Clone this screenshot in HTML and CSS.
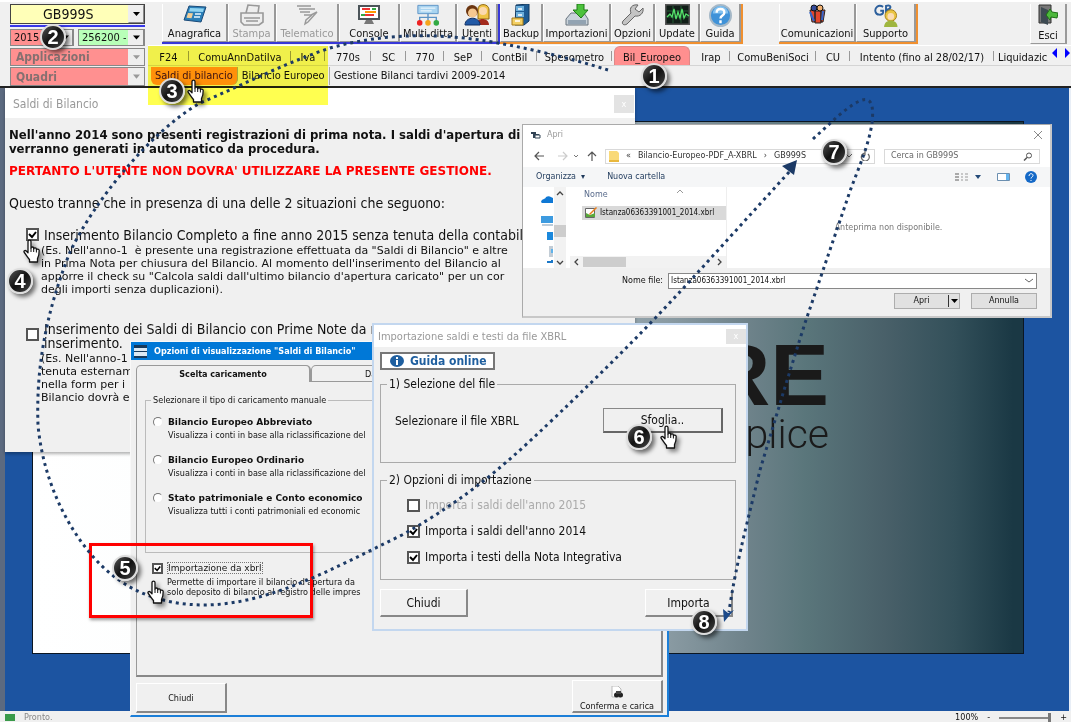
FILE: index.html
```html
<!DOCTYPE html>
<html lang="it">
<head>
    <meta charset="UTF-8">
    <meta name="viewport" content="width=device-width, initial-scale=1.0">
    <title>Saldi di Bilancio</title>
    <link rel="stylesheet" href="styles.css">
</head>
<body>
    <!-- shared shapes -->
    <svg class="defs" aria-hidden="true">
        <symbol id="hand" viewBox="0 0 18 24">
            <path d="M5 2.5C5 .6 8 .6 8 2.5V9c0-1.500 2.700-1.300 2.700.3v.5c.2-1.300 2.700-1.200 2.700.4v.6c.4-1.100 2.800-.9 2.800.8 0 4-.2 5.500-1.700 8V23H6.500v-2.500C4.800 18.500 3.300 16 1.300 13.500.3 12 2 10.800 3.300 12L5 13.800z" fill="#fff" stroke="#111" stroke-width="1.300" stroke-linejoin="round"/>
            <path d="M8 9v4M10.700 10v3M13.400 11v2.500" stroke="#111" stroke-width="1"/>
        </symbol>
    </svg>

    <header class="ribbon">
        <div class="selectors">
            <select class="combo company" aria-label="Ditta"><option>GB999S</option></select>
            <div class="selector-row">
                <select class="combo year" aria-label="Anno"><option>2015</option></select>
                <select class="combo code" aria-label="Codice"><option>256200 -</option></select>
            </div>
            <select class="combo section" aria-label="Applicazioni" disabled><option>Applicazioni</option></select>
            <select class="combo section" aria-label="Quadri" disabled><option>Quadri</option></select>
        </div>

        <div class="ribbon-main">
            <div class="toolbar">
                <div class="tool-group group-blue">
                    <button class="tool">
                        <svg width="24" height="20" viewBox="0 0 24 20"><path d="M6 2l17 1-5 15-17-2z" fill="#2a7fb8" stroke="#1b4a78"/><path d="M7 4l14 .6-1 3.400-14-.6z" fill="#8fd4f2"/><path d="M5 9l5 .2-1.500 5-5-.4z" fill="#f1cf9a"/><path d="M12 10h6M11 13h6" stroke="#e6f6ff" stroke-width="1.500"/></svg>
                        Anagrafica
                    </button>
                    <button class="tool" disabled>
                        <svg width="26" height="22" viewBox="0 0 26 22"><path d="M7 9L9 1l11 1-1 7M2 9h22v9l-4 3H5l-3-3zM5 14h16M7 17h12" fill="#eee" stroke="#999" stroke-width="1.600"/></svg>
                        Stampa
                    </button>
                    <button class="tool" disabled>
                        <svg width="24" height="22" viewBox="0 0 24 22"><path d="M2 2h14M4 5h16M5 8h10M9 11h7l6-3-9 10-3 2 1-4 6-5" fill="none" stroke="#999" stroke-width="1.400"/></svg>
                        Telematico
                    </button>
                    <button class="tool">
                        <svg width="24" height="22" viewBox="0 0 24 22"><path d="M1 1h22v15H1z" fill="#4c5459"/><path d="M3 3h18v11H3z" fill="#fff"/><path d="M5 5h8M8 11h9" stroke="#e33" stroke-width="2"/><path d="M8 8h11" stroke="#f90" stroke-width="2"/><path d="M15 5h4M4 11h4" stroke="#3a4" stroke-width="2"/><path d="M9 16h6l2 4H7z" fill="#777"/></svg>
                        Console
                    </button>
                    <button class="tool">
                        <svg width="24" height="23" viewBox="0 0 26 24"><path d="M2 1h22v9H2z" fill="#a9d4f0" stroke="#5b93c5"/><path d="M5 4h16M5 7h12" stroke="#fff"/><path d="M13 10v8M4 19v-5h18v5" fill="none" stroke="#5b93c5" stroke-width="1.500"/><circle cx="4" cy="20" r="3" fill="#e22"/><circle cx="13" cy="20" r="3" fill="#f5a51c"/><circle cx="22" cy="20" r="3" fill="#3a4"/></svg>
                        Multi ditta
                    </button>
                    <button class="tool">
                        <svg width="26" height="22" viewBox="0 0 26 22"><path d="M14 5c0-6 11-6 11 1v9H14z" fill="#f0c445" stroke="#8d6510"/><circle cx="19" cy="7" r="4" fill="#fbd9ae"/><path d="M12 21c0-8 13-8 13 0z" fill="#a32a1c"/><circle cx="8" cy="7" r="6" fill="#6b3510"/><circle cx="8.500" cy="9" r="4.500" fill="#f6c890"/><path d="M1 21c0-9 15-9 15 0z" fill="#2159a6" stroke="#103166"/></svg>
                        Utenti
                    </button>
                </div>
                <div class="tool-group group-orange">
                    <button class="tool">
                        <svg width="20" height="22" viewBox="0 0 20 22"><path d="M5 1l13-1v17l-5 4H4z" fill="#1e5c94" stroke="#123a60"/><path d="M5 2h8v5H5zM5 8h8v5H5z" fill="#6aaedb"/><path d="M1 14h11v7H1z" fill="#f3cf62" stroke="#a67a17"/><path d="M7 5h4M7 11h4M4 17h5" stroke="#fff" stroke-width="1.500"/></svg>
                        Backup
                    </button>
                    <button class="tool">
                        <svg width="24" height="22" viewBox="0 0 24 22"><path d="M1 15l5-6h13l4 6v6H1z" fill="#c9d2da" stroke="#68747e"/><path d="M3 16h18v4H3z" fill="#92a3b2"/><path d="M12 0h7v6h4l-7 8-8-8h4z" fill="#4cc23c" stroke="#1d7a16"/></svg>
                        Importazioni
                    </button>
                    <button class="tool">
                        <svg width="24" height="22" viewBox="0 0 24 22"><path d="M22 4l-4 4-4-3 3-4c-6-1-9 3-7 8L2 17c-2 3 1 5 4 3l8-8c5 1 9-3 8-8z" fill="#c4c4c4" stroke="#666"/></svg>
                        Opzioni
                    </button>
                    <button class="tool">
                        <svg width="25" height="21" viewBox="0 0 25 21"><path d="M.5.5h24v20H.5z" fill="#111e18" stroke="#555" stroke-width="2"/><path d="M2 7h21M2 13h21M8 2v17M16 2v17" stroke="#255c35"/><path d="M2 13l3-3 2 3 2-8 2 10 2-7 2 6 2-9 2 9 2-4 3 2" fill="none" stroke="#54e06a" stroke-width="1.300"/></svg>
                        Update
                    </button>
                    <button class="tool">
                        <svg width="23" height="23" viewBox="0 0 24 24"><circle cx="12" cy="12" r="11" fill="#3f92d8" stroke="#a5b8c7" stroke-width="2"/><path d="M4 10a8 8 0 0 1 16 0z" fill="#83c1ef"/><path d="M8 9c0-5 8-5 8 0 0 3-4 3-4 6M12 17v3" fill="none" stroke="#fff" stroke-width="2.500"/></svg>
                        Guida
                    </button>
                </div>
                <div class="tool-group group-support">
                    <button class="tool">
                        <svg width="18" height="20" viewBox="0 0 18 20"><path d="M2 6h5v12H4zM7 7h6v12H7zM13 6h4l-2 12h-2z" fill="#e2462b" stroke="#222"/><path d="M2 8l4 9M15 7l-1 9" stroke="#36c" stroke-width="2"/><circle cx="6" cy="4" r="3" fill="#334a9a" stroke="#111"/><circle cx="12" cy="4" r="3" fill="#f0b070" stroke="#111"/></svg>
                        Comunicazioni
                    </button>
                    <button class="tool">
                        <svg width="26" height="23" viewBox="0 0 26 24"><path d="M10 3c-5-3-9 1-8 5 1 4 7 4 8 1V7H7M13 10V2c6-2 6 3 1 4 6 0 5 5-1 4" fill="none" stroke="#2c5f9c" stroke-width="2"/><circle cx="18" cy="12" r="6" fill="#eac544" stroke="#a77e17"/><circle cx="18" cy="13" r="3.500" fill="#fbdcb4"/><path d="M11 24c0-9 14-9 14 0z" fill="#9fb63f"/></svg>
                        Supporto
                    </button>
                </div>
                <div class="tool-group group-exit">
                    <button class="tool">
                        <svg width="20" height="22" viewBox="0 0 20 22"><path d="M1 1h12v18H1z" fill="#777" stroke="#333"/><path d="M3 3l7 3v15l-7-3z" fill="#3d4a52"/><path d="M20 9l-6-1-2-3-4 6 4 5 1-3 6 1z" fill="#4db83c" stroke="#1d6e15"/></svg>
                        Esci
                    </button>
                </div>
            </div>

            <nav class="tabs">
                <a href="#" class="tab">F24</a>
                <a href="#" class="tab">ComuAnnDatiIva</a>
                <a href="#" class="tab">Iva</a>
                <a href="#" class="tab">770s</a>
                <a href="#" class="tab">SC</a>
                <a href="#" class="tab">770</a>
                <a href="#" class="tab">SeP</a>
                <a href="#" class="tab">ContBil</a>
                <a href="#" class="tab">Spesometro</a>
                <a href="#" class="tab tab-current">Bil_Europeo</a>
                <a href="#" class="tab">Irap</a>
                <a href="#" class="tab">ComuBeniSoci</a>
                <a href="#" class="tab">CU</a>
                <a href="#" class="tab">Intento (fino al 28/02/17)</a>
                <a href="#" class="tab tab-last">Liquidazic</a>
                <span class="tab-arrows">
                    <svg width="18" height="10" viewBox="0 0 18 10"><path d="M5 0v10L0 5zM13 0v10l5-5z" fill="#00f"/></svg>
                </span>
            </nav>
            <nav class="subtabs">
                <a href="#" class="subtab subtab-current">Saldi di bilancio</a>
                <a href="#" class="subtab">Bilancio Europeo</a>
                <a href="#" class="subtab">Gestione Bilanci tardivi 2009-2014</a>
            </nav>
        </div>
    </header>

    <main class="desktop">
        <div class="wallpaper">
            <div class="brand">RE</div>
            <div class="slogan">plice</div>
        </div>

        <section class="window win-saldi">
            <div class="win-title">
                <span>Saldi di Bilancio</span>
                <button class="win-close">x</button>
            </div>
            <div class="saldi-body">
                <p class="strong">Nell'anno 2014 sono presenti registrazioni di prima nota. I saldi d'apertura di<br>verranno generati in automatico da procedura.</p>
                <p class="strong warning">PERTANTO L'UTENTE NON DOVRA' UTILIZZARE LA PRESENTE GESTIONE.</p>
                <p class="intro">Questo tranne che in presenza di una delle 2 situazioni che seguono:</p>
                <div class="choice">
                    <input type="checkbox" class="check" id="completo" checked>
                    <div>
                        <label for="completo">Inserimento Bilancio Completo a fine anno 2015 senza tenuta della contabil</label>
                        <p class="note">(Es. Nell'anno-1&nbsp; è presente una registrazione effettuata da "Saldi di Bilancio" e altre<br>in Prima Nota per chiusura del Bilancio. Al momento dell'inserimento del Bilancio al<br>apporre il check su "Calcola saldi dall'ultimo bilancio d'apertura caricato" per un cor<br>degli importi senza duplicazioni).</p>
                    </div>
                </div>
                <div class="choice">
                    <input type="checkbox" class="check" id="saldi">
                    <div>
                        <label for="saldi">Inserimento dei Saldi di Bilancio con Prime Note da r<br>inserimento.</label>
                        <p class="note">(Es. Nell'anno-1<br>tenuta esternam<br>nella form per i<br>Bilancio dovrà e</p>
                    </div>
                </div>
            </div>
        </section>

        <section class="window win-file">
            <div class="file-title">
                <svg width="10" height="8" viewBox="0 0 10 8"><path d="M0 1h5v2H0zM2 3h6v4H2z" fill="#345" /><path d="M4 4h5v3H4z" fill="#fff" stroke="#345"/></svg>
                <span>Apri</span>
                <button class="file-close" aria-label="Chiudi">
                    <svg width="8" height="8" viewBox="0 0 8 8"><path d="M0 0l8 8M8 0L0 8" stroke="#888"/></svg>
                </button>
            </div>
            <div class="file-nav">
                <svg width="66" height="10" viewBox="0 0 66 10" fill="none"><path d="M5 1L1 5l4 4M1 5h9" stroke="#555" stroke-width="1.200"/><path d="M29 1l4 4-4 4M33 5h-9" stroke="#ccc" stroke-width="1.200"/><path d="M40 4l2 2 2-2" stroke="#777"/><path d="M54 5l4-4 4 4M58 1v9" stroke="#555" stroke-width="1.200"/></svg>
                <div class="address">
                    <svg width="10" height="11" viewBox="0 0 10 11"><path d="M0 0h8l2 2v9H0z" fill="#f9d978"/><path d="M0 9h10v2H0z" fill="#e9b83d"/></svg>
                    <span>«</span><span>Bilancio-Europeo-PDF_A-XBRL</span><span>›</span><span>GB999S</span>
                    <svg class="address-end" width="26" height="10" viewBox="0 0 26 10" fill="none"><path d="M1 3l3 3 3-3" stroke="#666"/><path d="M20 2a4 4 0 1 0 3 1M20 0v4h-4" stroke="#666" stroke-width="1.200"/></svg>
                </div>
                <label class="file-search">
                    <input type="text" placeholder="Cerca in GB999S" aria-label="Cerca in GB999S">
                    <svg width="10" height="9" viewBox="0 0 10 9" fill="none"><circle cx="6" cy="3.500" r="2.500" stroke="#555"/><path d="M4 5.500L1 8.500" stroke="#555" stroke-width="1.500"/></svg>
                </label>
            </div>
            <div class="file-tools">
                <button>Organizza&nbsp; ▾</button>
                <button>Nuova cartella</button>
                <svg width="82" height="12" viewBox="0 0 82 12"><path d="M0 2h4v2H0zM0 5h4v2H0zM0 8h4v2H0z" fill="#aaa"/><path d="M6 3h2M10 3h3M6 6h2M10 6h3M6 9h2M10 9h3" stroke="#999"/><path d="M20 4h6l-3 4z" fill="#234a78"/><path d="M42.500 2.500h12v7h-12z" fill="#fff" stroke="#6b8fb0"/><path d="M51 3h3v6h-3z" fill="#64b5f0"/><circle cx="76" cy="6" r="6" fill="#1569c7"/><path d="M74 5c0-3 4-3 4-.5 0 1.500-2 1.500-2 3M76 9v1" fill="none" stroke="#fff"/></svg>
            </div>
            <div class="file-content">
                <div class="file-tree">
                    <svg width="12" height="76" viewBox="0 0 12 76"><path d="M0 15c1-4 4-2 5-5 3-2 5 0 7 1v5H1z" fill="#0f78d4"/><path d="M0 29h12v7H0z" fill="#3d9be0"/><path d="M1 38h11" stroke="#7a9ab5"/><path d="M6 45h6v8H6z" fill="#1b88dc"/><path d="M8 59h4v11H8z" fill="#c3cdd6"/><path d="M10 62h2v4h-2z" fill="#5fb2ea"/><path d="M7 76v-1h4v-2" stroke="#1b78c8" stroke-width="2" fill="none"/></svg>
                </div>
                <div class="vscroll">
                    <svg width="8" height="5" viewBox="0 0 8 5"><path d="M1 4l3-3 3 3" fill="none" stroke="#444" stroke-width="1.300"/></svg>
                    <span></span>
                    <svg width="8" height="5" viewBox="0 0 8 5"><path d="M1 1l3 3 3-3" fill="none" stroke="#444" stroke-width="1.300"/></svg>
                </div>
                <div class="file-list">
                    <div class="file-head">Nome
                        <svg width="8" height="4" viewBox="0 0 8 4"><path d="M1 4l3-3 3 3" fill="none" stroke="#999"/></svg>
                    </div>
                    <div class="file-row">
                        <svg width="14" height="12" viewBox="0 0 14 12"><path d="M1.500 1.500h9v9h-9z" fill="#fff" stroke="#666"/><path d="M2 6l4 2 5-2v4H2z" fill="#59a83a"/><path d="M5 7l7-7 1 1-7 7z" fill="#e97b17"/></svg>
                        Istanza06363391001_2014.xbrl
                    </div>
                    <div class="hscroll">
                        <svg width="5" height="8" viewBox="0 0 5 8"><path d="M4 1L1 4l3 3" fill="none" stroke="#444" stroke-width="1.300"/></svg>
                        <span></span>
                        <svg width="5" height="8" viewBox="0 0 5 8"><path d="M1 1l3 3-3 3" fill="none" stroke="#444" stroke-width="1.300"/></svg>
                    </div>
                </div>
                <div class="file-preview">Anteprima non disponibile.</div>
            </div>
            <div class="file-footer">
                <div class="file-name">
                    <label for="nomefile">Nome file:</label>
                    <select id="nomefile"><option>Istanza06363391001_2014.xbrl</option></select>
                </div>
                <div class="file-buttons">
                    <button class="open">
                        <span>Apri</span>
                        <svg width="11" height="12" viewBox="0 0 11 12"><path d="M.5 0v12" stroke="#333"/><path d="M3 4h7L6.500 8z"/></svg>
                    </button>
                    <button>Annulla</button>
                </div>
            </div>
        </section>

        <section class="window win-options">
            <div class="options-title">
                <svg width="13" height="13" viewBox="0 0 13 13"><path d="M0 0h13v13H0z" fill="#173a5c"/><path d="M0 3h13v3H0zM0 7h13v4H0z" fill="#dbe9f4"/></svg>
                <span>Opzioni di visualizzazione "Saldi di Bilancio"</span>
            </div>
            <div class="options-tabs">
                <button class="options-tab active">Scelta caricamento</button>
                <button class="options-tab">Da</button>
            </div>
            <div class="options-panel">
                <fieldset>
                    <legend>Selezionare il tipo di caricamento manuale</legend>
                    <div class="radio-item">
                        <input type="radio" name="tipo" id="abbreviato">
                        <label for="abbreviato">Bilancio Europeo Abbreviato</label>
                        <p>Visualizza i conti in base alla riclassificazione del</p>
                    </div>
                    <div class="radio-item">
                        <input type="radio" name="tipo" id="ordinario">
                        <label for="ordinario">Bilancio Europeo Ordinario</label>
                        <p>Visualizza i conti in base alla riclassificazione del</p>
                    </div>
                    <div class="radio-item">
                        <input type="radio" name="tipo" id="stato">
                        <label for="stato">Stato patrimoniale e Conto economico</label>
                        <p>Visualizza tutti i conti patrimoniali ed economic</p>
                    </div>
                </fieldset>
                <div class="xbrl-option">
                    <input type="checkbox" class="check small" id="xbrl" checked>
                    <label for="xbrl">Importazione da xbrl</label>
                    <p>Permette di importare il bilancio d'apertura da<br>solo deposito di bilancio al registro delle impres</p>
                </div>
            </div>
            <div class="options-footer">
                <button class="raised">Chiudi</button>
                <button class="raised confirm">
                    <svg width="12" height="12" viewBox="0 0 12 12"><path d="M1 0h6l3 3v8H1z" fill="#fff" stroke="#bbb"/><circle cx="5.500" cy="9" r="2.500" fill="#222"/><circle cx="9.500" cy="9" r="2.500" fill="#222"/><path d="M5 5h5v3H5z" fill="#444"/></svg>
                    Conferma e carica
                </button>
            </div>
        </section>

        <section class="window win-import">
            <div class="import-title">
                <span>Importazione saldi e testi da file XBRL</span>
                <button class="win-close">x</button>
            </div>
            <div class="import-body">
                <button class="guide">
                    <svg width="14" height="12" viewBox="0 0 14 12"><ellipse cx="7" cy="6" rx="7" ry="6" fill="#1f5f9f"/><path d="M7 2v2M7 5v5" stroke="#fff" stroke-width="2"/></svg>
                    Guida online
                </button>
                <fieldset class="pick">
                    <legend>1) Selezione del file</legend>
                    <span>Selezionare il file XBRL</span>
                    <button class="browse">Sfoglia..</button>
                </fieldset>
                <fieldset class="import-options">
                    <legend>2) Opzioni di importazione</legend>
                    <div class="import-check off">
                        <input type="checkbox" class="check" id="s2015" disabled>
                        <label for="s2015">Importa i saldi dell'anno 2015</label>
                    </div>
                    <div class="import-check">
                        <input type="checkbox" class="check" id="s2014" checked>
                        <label for="s2014">Importa i saldi dell'anno 2014</label>
                    </div>
                    <div class="import-check">
                        <input type="checkbox" class="check" id="nota" checked>
                        <label for="nota">Importa i testi della Nota Integrativa</label>
                    </div>
                </fieldset>
                <div class="import-footer">
                    <button class="raised">Chiudi</button>
                    <button class="raised">Importa</button>
                </div>
            </div>
        </section>
    </main>

    <footer class="status">
        <i class="status-icon"></i>
        <span class="status-text">Pronto.</span>
        <span>100%</span>
        <button>-</button>
        <input type="range" value="100" aria-label="Zoom">
        <button>+</button>
    </footer>

    <!-- walkthrough marks -->
    <div class="highlight"></div>
    <div class="redbox"></div>
    <svg class="route" width="1071" height="722" viewBox="0 0 1071 722" aria-hidden="true">
        <path class="dots" d="M608 70C570 58 520 46 480 40C430 33 380 34 330 48C285 63 245 84 200 103C150 132 95 200 70 252C45 315 36 370 38 425C42 470 60 517 90 553C120 590 160 605 205 605C270 604 330 570 402 535C470 497 510 460 547 425C610 365 640 335 690 281L790 171"/>
        <path d="M797 160l-3 15-12-9z" fill="#1c3a66"/>
        <path class="dots" d="M813 139L838 116C860 98 876 88 872 123C868 150 855 175 847 200L805 323L785 387L760 470L747 523C738 560 732 590 729 612"/>
        <path d="M724 622l-1-13 5 4 6-3z" fill="#1c4a8a"/>
    </svg>
    <span class="badge b1">1</span>
    <span class="badge b2">2</span>
    <span class="badge b3">3</span>
    <span class="badge b4">4</span>
    <span class="badge b5">5</span>
    <span class="badge b6">6</span>
    <span class="badge b7">7</span>
    <span class="badge b8">8</span>
    <svg class="hand h1"><use href="#hand"/></svg>
    <svg class="hand h2"><use href="#hand"/></svg>
    <svg class="hand h3"><use href="#hand"/></svg>
    <svg class="hand h4"><use href="#hand"/></svg>
</body>
</html>
```
FILE: styles.css
```css
* {
    box-sizing: border-box;
}
body {
    margin: 0;
    height: 100vh;
    display: flex;
    flex-direction: column;
    overflow: hidden;
    position: relative;
    background-color: #f0f0f0;
    font-family: "DejaVu Sans Condensed", "DejaVu Sans", sans-serif;
    font-size: 11px;
    color: #111;
}
p {
    margin: 0;
}
button, input, select {
    font: inherit;
    color: inherit;
    margin: 0;
}
button {
    padding: 0;
    border: none;
    background: none;
    white-space: nowrap;
}
a {
    color: inherit;
    text-decoration: none;
}
svg {
    display: block;
    flex: none;
}
.defs {
    position: absolute;
    width: 0;
    height: 0;
}

/* ribbon */
.ribbon {
    display: flex;
    flex: none;
    height: 88px;
    border-top: 2px solid #fff;
    border-bottom: 2px solid #222;
}
.selectors {
    width: 148px;
    padding: 2px 3px 0 10px;
    display: flex;
    flex-direction: column;
}
.combo {
    appearance: none;
    height: 20px;
    padding: 0 18px 0 3px;
    border: 1px solid #888;
    border-radius: 0;
    background: #fff url("data:image/svg+xml,%3Csvg xmlns='http://www.w3.org/2000/svg' width='16' height='18'%3E%3Cpath d='M0 0h16v18H0z' fill='%23eee'/%3E%3Cpath d='M.5 17.500h15V.5' fill='none' stroke='%23888'/%3E%3Cpath d='M5 7h7l-3.500 4z'/%3E%3C/svg%3E") no-repeat right center;
}
.company {
    width: 100%;
    padding-left: 32px;
    border-color: #444;
    background-color: #ffffb8;
    font-size: 14px;
}
.selector-row {
    display: flex;
    gap: 4px;
    margin-top: 1px;
    padding-top: 2px;
    border-top: 2px solid #3838e8;
}
.selector-row .combo {
    height: 17px;
}
.year {
    width: 64px;
    background-color: #ff9090;
}
.code {
    flex: 1;
    min-width: 0;
    background-color: #b8ffb8;
}
.section {
    width: 100%;
    margin-top: 2px;
    height: 19px;
    padding-left: 5px;
    background-color: #ff9090;
    background-image: url("data:image/svg+xml,%3Csvg xmlns='http://www.w3.org/2000/svg' width='16' height='18'%3E%3Cpath d='M0 0h16v18H0z' fill='%23eee'/%3E%3Cpath d='M5 7h7l-3.500 4z' fill='%23999'/%3E%3C/svg%3E");
    color: #857070;
    font-size: 12px;
    font-weight: bold;
    opacity: 1;
}
.section + .section {
    margin-top: 1px;
}
.ribbon-main {
    flex: 1;
    min-width: 0;
    display: flex;
    flex-direction: column;
}
.toolbar {
    display: flex;
    height: 43px;
    padding: 2px 4px 0 14px;
}
.tool-group {
    display: grid;
    height: 40px;
}
.group-blue {
    grid-template-columns: 66px 48px 63px 61px 57px 41px;
    border-right: 2px solid #3838d8;
    border-bottom: 2px solid #3838d8;
}
.group-orange {
    grid-template-columns: 43px 68px 44px 45px 41px;
    border-right: 2px solid #f09030;
    border-bottom: 2px solid #f09030;
}
.group-support {
    grid-template-columns: 77px 60px;
    margin-left: 36px;
    border-right: 2px solid #f09030;
    border-bottom: 2px solid #f09030;
}
.group-exit {
    grid-template-columns: 37px;
    margin-left: auto;
}
.tool {
    display: flex;
    flex-direction: column;
    align-items: center;
    justify-content: space-between;
    min-width: 0;
    border-right: 2px solid #999;
    border-bottom: 1px solid #999;
    border-left: 1px solid #fff;
    line-height: 14px;
    background-color: #efefef;
    overflow: hidden;
}
.tool:disabled {
    color: #999;
}
.tabs {
    display: grid;
    grid-template-columns: 41px 102px 34px 46px 35px 38px 38px 55px 75px 80px 38px 86px 34px 144px 1fr 19px;
    height: 20px;
    border-top: 1px solid #fff;
}
.tab {
    display: flex;
    align-items: center;
    justify-content: center;
    min-width: 0;
    padding-top: 3px;
    white-space: nowrap;
    background: linear-gradient(#999, #999) no-repeat right center / 1px 10px;
}
.tab-current {
    margin: 0 2px;
    border: 1px solid #d88;
    border-bottom: none;
    border-radius: 6px 6px 0 0;
    background: #ff8f8f;
}
.tab-last {
    justify-content: flex-start;
    padding-left: 4px;
    background: none;
}
.tab-arrows {
    align-self: start;
    padding-top: 2px;
}
.subtabs {
    display: flex;
    align-items: center;
    height: 20px;
    border-top: 1px solid #d4d4d4;
}
.subtab {
    padding: 0 4px;
    line-height: 18px;
    white-space: nowrap;
    border-right: 1px solid #aaa;
}
.subtab:last-child {
    border-right: none;
}
.subtab-current {
    margin-left: 3px;
    border-radius: 0 0 6px 6px;
    background-color: #ff9020;
    color: #3a1038;
}

/* desktop */
.desktop {
    position: relative;
    flex: 1;
    min-height: 0;
    border-left: 5px solid #5c6a80;
    border-right: 2px solid #e8eef6;
    background-color: #1c54a1;
}
.wallpaper {
    position: absolute;
    left: 27px;
    top: 33px;
    right: 45px;
    bottom: 57px;
    padding: 208px 194px 0 0;
    border: 1px solid #0b1622;
    background: linear-gradient(90deg, #fff 0%, #fdfefe 12%, #8a9ba3 64%, #6f838b 72%, #5a767b 78%, #496069 86%, #33505a 93%, #1a3844 99%);
    text-align: right;
    color: #1a1a1a;
    font-family: Roboto, sans-serif;
}
.brand {
    font-family: "Liberation Sans", sans-serif;
    font-size: 88px;
    line-height: 89px;
    font-weight: bold;
}
.slogan {
    font-size: 41px;
    line-height: 30px;
    font-weight: 300;
}
.window {
    position: absolute;
    overflow: hidden;
    background-color: #f0f0f0;
    white-space: nowrap;
}
.win-close {
    width: 20px;
    height: 18px;
    background-color: #e3e3e3;
    color: #fff;
    font-size: 9px;
}

/* Saldi di Bilancio */
.win-saldi {
    left: 0;
    top: 0;
    width: 630px;
    height: 364px;
    box-shadow: 0 2px 3px rgba(0, 0, 0, 0.3);
}
.win-title {
    display: flex;
    align-items: center;
    justify-content: space-between;
    height: 30px;
    padding: 2px 1px 0 8px;
    background-color: #fff;
    color: #999;
    font-size: 12px;
}
.saldi-body {
    padding: 10px 4px;
    font-size: 14px;
    line-height: 14px;
}
.strong {
    font-weight: bold;
    font-size: 13px;
}
.warning {
    margin-top: 8px;
    color: #f00;
    font-family: "DejaVu Sans", sans-serif;
    font-size: 12px;
}
.intro {
    margin-top: 18px;
}
.choice {
    display: flex;
    gap: 2px;
    padding-left: 17px;
    margin-top: 18px;
}
.choice + .choice {
    margin-top: 26px;
}
.choice + .choice .check {
    margin-top: 6px;
}
.choice label {
    display: block;
    padding-left: 3px;
}
.note {
    font-family: "DejaVu Sans", sans-serif;
    font-size: 11px;
    line-height: 13px;
    margin-top: 2px;
}
.check {
    appearance: none;
    flex: none;
    width: 13px;
    height: 13px;
    border: 2px solid #555;
    background: #fff;
}
.check:checked {
    background: #fff url("data:image/svg+xml,%3Csvg xmlns='http://www.w3.org/2000/svg' viewBox='0 0 9 9'%3E%3Cpath d='M1 4l3 3 4-5' fill='none' stroke='%23000' stroke-width='2'/%3E%3C/svg%3E") no-repeat center;
}
.check.small {
    width: 11px;
    height: 11px;
}

/* open file dialog */
.win-file {
    left: 517px;
    top: 36px;
    width: 530px;
    height: 194px;
    border: 1px solid #aaa;
    border-right: 2px solid #c8c8c8;
    border-bottom: 2px solid #c8c8c8;
    background-color: #fff;
    font-family: "DejaVu Sans", sans-serif;
    font-size: 8px;
    line-height: 12px;
}
.file-title {
    display: flex;
    align-items: center;
    gap: 6px;
    height: 20px;
    padding: 0 8px;
    color: #999;
}
.file-close {
    margin-left: auto;
}
.file-nav {
    display: flex;
    align-items: center;
    height: 22px;
    padding: 0 10px 0 11px;
    gap: 5px;
}
.address {
    display: flex;
    align-items: center;
    gap: 7px;
    flex: 1;
    height: 15px;
    padding: 0 3px;
    border: 1px solid #d9d9d9;
    color: #333;
}
.address-end {
    margin-left: auto;
}
.file-search {
    display: flex;
    align-items: center;
    width: 156px;
    height: 15px;
    margin-left: 4px;
    padding: 0 6px;
    border: 1px solid #d9d9d9;
}
.file-search input {
    flex: 1;
    min-width: 0;
    padding: 0;
    border: none;
}
.file-search input::placeholder {
    color: #666;
}
.file-tools {
    display: flex;
    align-items: center;
    gap: 22px;
    height: 20px;
    padding: 0 13px;
    background-color: #f5f6f7;
    color: #1e395b;
}
.file-tools svg {
    margin-left: auto;
}
.file-content {
    display: flex;
    height: 81px;
}
.file-tree {
    padding-left: 18px;
}
.vscroll {
    display: flex;
    flex-direction: column;
    align-items: center;
    justify-content: space-between;
    width: 12px;
    margin-left: 1px;
    padding: 4px 0 3px;
    background-color: #f2f2f2;
}
.vscroll span {
    width: 12px;
    height: 12px;
    margin-top: 22px;
    margin-bottom: 16px;
    background-color: #cdcdcd;
}
.file-list {
    display: flex;
    flex-direction: column;
    width: 157px;
    margin-left: 4px;
    border-right: 1px solid #eee;
}
.file-head {
    display: flex;
    gap: 68px;
    height: 18px;
    padding: 2px 14px 0;
    color: #5a6c8c;
}
.file-row {
    display: flex;
    align-items: center;
    gap: 2px;
    height: 14px;
    margin-top: 1px;
    margin-left: 12px;
    padding: 0 2px;
    background-color: #d9d9d9;
    font-family: "DejaVu Sans Condensed", sans-serif;
}
.hscroll {
    display: flex;
    align-items: center;
    height: 12px;
    margin-top: auto;
    padding: 0 4px;
    gap: 4px;
    background-color: #f2f2f2;
}
.hscroll span {
    width: 43px;
    height: 10px;
    margin-right: auto;
    background-color: #cdcdcd;
}
.file-preview {
    flex: 1;
    display: flex;
    align-items: center;
    justify-content: center;
    color: #777;
}
.file-footer {
    height: 50px;
    padding: 5px 13px 0;
    background-color: #f0f0f0;
}
.file-name {
    display: flex;
    align-items: center;
    gap: 5px;
    padding-left: 86px;
}
.file-name select {
    appearance: none;
    flex: 1;
    height: 16px;
    padding: 0 2px;
    border: 1px solid #888;
    border-radius: 0;
    background: #fff url("data:image/svg+xml,%3Csvg xmlns='http://www.w3.org/2000/svg' width='12' height='6'%3E%3Cpath d='M1 1l4 3 4-3' fill='none' stroke='%23666'/%3E%3C/svg%3E") no-repeat right center;
    font-family: "DejaVu Sans Condensed", sans-serif;
}
.file-buttons {
    display: flex;
    justify-content: flex-end;
    gap: 11px;
    margin-top: 4px;
}
.file-buttons button {
    width: 66px;
    height: 16px;
    border: 1px solid #adadad;
    background-color: #e1e1e1;
}
.open {
    display: flex;
    align-items: center;
    justify-content: space-between;
}
.open span {
    flex: 1;
}

/* display options */
.win-options {
    left: 125px;
    top: 253px;
    width: 539px;
    height: 376px;
    padding-left: 5px;
    border: 1px solid #f8f8f8;
    border-right: 2px solid #1c7fd8;
    border-bottom: 2px solid #1c7fd8;
    font-size: 9px;
    line-height: 10px;
}
.options-title {
    display: flex;
    align-items: center;
    gap: 7px;
    height: 18px;
    margin-left: -5px;
    padding-left: 3px;
    background-color: #0078d7;
    color: #fff;
    font-weight: bold;
}
.options-tabs {
    display: flex;
    height: 22px;
    padding-top: 5px;
}
.options-tab {
    width: 175px;
    border: 1px solid #999;
    border-right-width: 2px;
    border-radius: 5px 5px 0 0;
}
.options-tab:last-child {
    width: 120px;
}
.options-tab.active {
    border-bottom: none;
    font-weight: bold;
}
.options-panel {
    height: 295px;
    margin-right: 4px;
    padding: 13px 9px 0 8px;
    border: 1px solid #999;
    border-top: none;
    border-right: 2px solid #888;
    border-bottom: 2px solid #888;
}
.options-panel fieldset {
    margin: 0;
    padding: 12px 0 21px 7px;
    border: 1px solid #bbb;
}
.options-panel legend {
    padding: 0 2px;
    margin-left: -2px;
}
.radio-item, .xbrl-option {
    display: grid;
    grid-template-columns: 15px 1fr;
    align-items: center;
    row-gap: 3px;
    margin-bottom: 15px;
}
.radio-item p, .xbrl-option p {
    grid-column: 2;
}
.radio-item label {
    font-family: "DejaVu Sans", sans-serif;
    font-weight: bold;
}
.radio-item input {
    appearance: none;
    width: 10px;
    height: 10px;
    border: 1px solid #777;
    border-right-color: #eee;
    border-bottom-color: #eee;
    border-radius: 50%;
    background-color: #fff;
}
.xbrl-option {
    margin-top: 9px;
    padding-left: 7px;
}
.xbrl-option label {
    justify-self: start;
    border: 1px dotted #777;
    font-family: "DejaVu Sans", sans-serif;
}
.options-footer {
    display: flex;
    justify-content: space-between;
    align-items: flex-end;
    margin: 3px 4px 0 0;
}
.raised {
    width: 91px;
    height: 30px;
    border-top: 1px solid #fff;
    border-left: 1px solid #fff;
    border-right: 2px solid #888;
    border-bottom: 2px solid #888;
    background-color: #f0f0f0;
}
.confirm {
    display: flex;
    flex-direction: column;
    align-items: center;
    justify-content: flex-end;
    gap: 3px;
    height: 33px;
}

/* xbrl import */
.win-import {
    left: 367px;
    top: 235px;
    width: 376px;
    height: 308px;
    border: 2px solid #c3d7ef;
}
.import-title {
    display: flex;
    align-items: center;
    justify-content: space-between;
    height: 22px;
    padding: 0 0 0 4px;
    background-color: #fff;
    color: #999;
    font-size: 11px;
}
.import-title .win-close {
    height: 15px;
}
.import-body {
    padding: 5px 10px 0 6px;
    font-size: 12px;
}
.guide {
    display: flex;
    align-items: center;
    gap: 6px;
    width: 115px;
    height: 18px;
    padding-left: 8px;
    border: 2px solid #777;
    background-color: #fff;
    color: #1f5f9f;
    font-weight: bold;
}
.import-body fieldset {
    margin: 0;
    padding: 0 12px 0 14px;
    border: 1px solid #aaa;
}
.import-body legend {
    margin-left: -8px;
    padding: 0 2px;
    line-height: 14px;
}
.import-body .pick {
    display: flex;
    align-items: center;
    justify-content: space-between;
    height: 86px;
    margin-top: 7px;
    padding-bottom: 12px;
}
.browse {
    width: 120px;
    height: 25px;
    border: 1px solid #888;
    border-right: 2px solid #666;
    border-bottom: 2px solid #666;
}
.import-body .import-options {
    height: 107px;
    margin-top: 10px;
    padding: 5px 12px 0 26px;
}
.import-body .import-options legend {
    margin-left: -20px;
}
.import-check {
    display: flex;
    align-items: center;
    gap: 5px;
    height: 26px;
}
.import-check.off {
    color: #aaa;
}
.import-footer {
    display: flex;
    justify-content: space-between;
    margin-top: 9px;
    padding-right: 3px;
}
.import-footer .raised {
    width: 88px;
    height: 28px;
}

/* status bar */
.status {
    display: flex;
    flex: none;
    align-items: center;
    gap: 9px;
    height: 11px;
    padding: 2px 4px 0 5px;
    font-size: 9px;
    line-height: 9px;
}
.status-icon {
    width: 10px;
    height: 7px;
    background-color: #3a9a4a;
}
.status-text {
    margin-right: auto;
    color: #888;
}
.status input {
    appearance: none;
    width: 52px;
    height: 9px;
    background: linear-gradient(#888, #888) no-repeat center / 100% 2px;
}
.status input::-webkit-slider-thumb {
    appearance: none;
    width: 3px;
    height: 9px;
    background-color: #777;
}

/* walkthrough marks */
.highlight {
    position: absolute;
    left: 148px;
    top: 46px;
    width: 180px;
    height: 59px;
    background-color: #ffff50;
    mix-blend-mode: multiply;
}
.redbox {
    position: absolute;
    left: 89px;
    top: 543px;
    width: 224px;
    height: 75px;
    border: 3px solid #f00;
    box-shadow: 1px 2px 3px rgba(0, 0, 0, 0.4);
}
.route {
    position: absolute;
    left: 0;
    top: 0;
}
.dots {
    fill: none;
    stroke: #1c3a66;
    stroke-width: 3;
    stroke-dasharray: 3 4;
}
.badge {
    position: absolute;
    width: 26px;
    height: 26px;
    border: 2px solid #ddd;
    border-radius: 50%;
    background: linear-gradient(135deg, #555, #111 50%, #444);
    box-shadow: 3px 3px 4px rgba(0, 0, 0, 0.55);
    color: #fff;
    font-family: "Liberation Sans", sans-serif;
    font-size: 20px;
    font-weight: bold;
    line-height: 22px;
    text-align: center;
}
.b1 { left: 641px; top: 63px; }
.b2 { left: 40px; top: 24px; }
.b3 { left: 159px; top: 78px; }
.b4 { left: 7px; top: 268px; }
.b5 { left: 112px; top: 555px; }
.b6 { left: 626px; top: 424px; }
.b7 { left: 821px; top: 139px; }
.b8 { left: 691px; top: 609px; }
.hand {
    position: absolute;
    width: 18px;
    height: 24px;
    filter: drop-shadow(3px 3px 2px rgba(0, 0, 0, 0.45));
}
.h1 { left: 187px; top: 79px; }
.h2 { left: 23px; top: 239px; }
.h3 { left: 147px; top: 580px; }
.h4 { left: 660px; top: 425px; }
```
